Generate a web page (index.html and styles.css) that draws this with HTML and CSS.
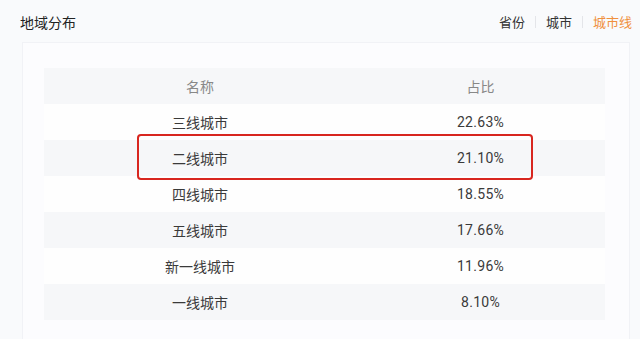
FILE: index.html
```html
<!DOCTYPE html>
<html lang="zh">
<head>
<meta charset="utf-8">
<link rel="stylesheet" href="styles.css">
</head>
<body>
<div class="page">
  <div class="header">
    <div class="title">地域分布</div>
    <div class="tabs">
      <span class="tab">省份</span>
      <span class="sep"></span>
      <span class="tab">城市</span>
      <span class="sep"></span>
      <span class="tab active">城市线</span>
    </div>
  </div>
  <div class="card">
    <div class="table-wrap">
      <div class="row head"><div class="c1">名称</div><div class="c2">占比</div></div>
      <div class="row"><div class="c1">三线城市</div><div class="c2 num">22.63%</div></div>
      <div class="row alt"><div class="c1">二线城市</div><div class="c2 num">21.10%</div></div>
      <div class="row"><div class="c1">四线城市</div><div class="c2 num">18.55%</div></div>
      <div class="row alt"><div class="c1">五线城市</div><div class="c2 num">17.66%</div></div>
      <div class="row"><div class="c1">新一线城市</div><div class="c2 num">11.96%</div></div>
      <div class="row alt"><div class="c1">一线城市</div><div class="c2 num">8.10%</div></div>
      <div class="highlight"></div>
    </div>
  </div>
</div>
</body>
</html>
```
FILE: styles.css
```css
html, body {
  margin: 0;
  padding: 0;
}
body {
  background: #f9fafc;
  font-family: "Noto Sans CJK SC", "Noto Sans", sans-serif;
  color: #333;
  width: 640px;
  height: 339px;
  overflow: hidden;
}
.header {
  display: flex;
  align-items: center;
  justify-content: space-between;
  height: 42px;
  padding: 0 8px 0 20px;
}
.title {
  font-size: 14px;
  color: #222;
  line-height: 20px;
  margin-top: 2px;
}
.tabs {
  display: flex;
  align-items: center;
  gap: 10px;
  margin-top: 2px;
}
.tab {
  font-size: 13px;
  color: #333;
  line-height: 20px;
}
.tab.active {
  color: #f0903e;
}
.sep {
  width: 1px;
  height: 12px;
  background: #e4e5e9;
}
.card {
  margin: 0 10px 0 22px;
  height: 297px;
  background: #fcfcfe;
  border: 1px solid #f1f2f6;
  border-bottom: none;
  box-sizing: border-box;
  padding: 25px 24px 0 21px;
}
.table-wrap {
  position: relative;
}
.row {
  display: flex;
  height: 36px;
  align-items: center;
  font-size: 14px;
  color: #3a3a3a;
  background: #fefefe;
}
.row.head,
.row.alt {
  background: #f6f7f9;
}
.row.head {
  color: #888;
}
.c1 {
  width: 312px;
  text-align: center;
}
.c2 {
  flex: 1;
  text-align: center;
}
.num {
  font-family: "Roboto", "Noto Sans", sans-serif;
  letter-spacing: 0.3px;
}
.highlight {
  position: absolute;
  left: 93px;
  top: 66px;
  width: 396px;
  height: 46px;
  border: 2px solid #d8261f;
  border-radius: 4px;
  box-sizing: border-box;
}
```
